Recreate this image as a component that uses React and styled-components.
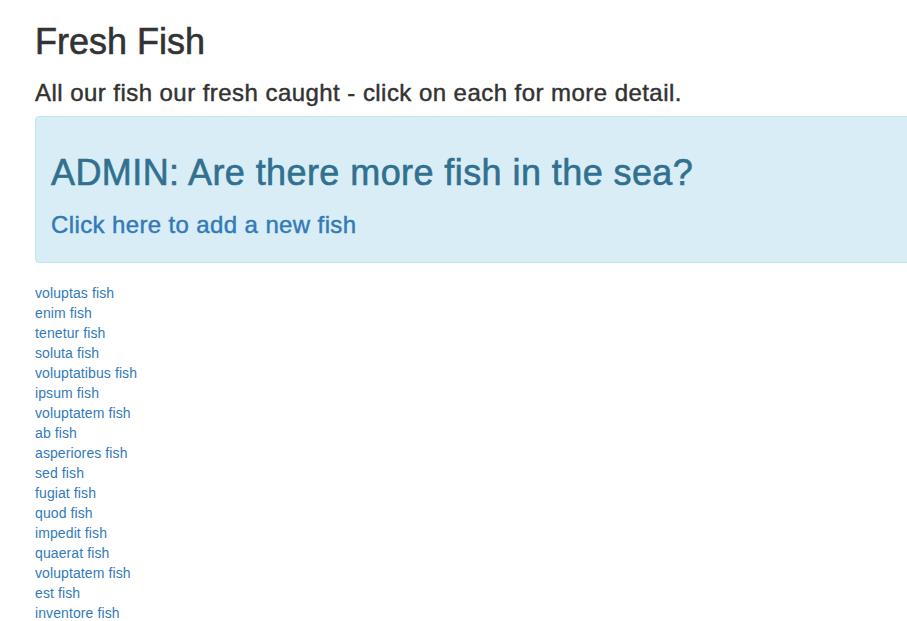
import React from "react";
import styled, { createGlobalStyle } from "styled-components";

const Global = createGlobalStyle`
  html, body { margin: 0; padding: 0; background: #fff; overflow: hidden; }
  body {
    font-family: "Liberation Sans", Arial, Helvetica, sans-serif;
    font-size: 14px;
    line-height: 1.42857143;
    color: #333;
  }
`;

const Page = styled.div`
  padding: 0 0 0 35px;
  width: 1200px;
`;

const Title = styled.h1`
  font-size: 36px;
  font-weight: 500;
  line-height: 1.1;
  margin: 20px 0 10px;
  padding-top: 2px;
  color: #333;
  -webkit-text-stroke: 0.6px #333;
`;

const Subtitle = styled.h3`
  font-size: 24px;
  font-weight: 500;
  line-height: 1.1;
  margin: 18px 0 10px;
  color: #333;
  letter-spacing: 0.45px;
  -webkit-text-stroke: 0.45px #333;
`;

const Alert = styled.div`
  padding: 15px;
  margin-bottom: 20px;
  border: 1px solid #bce8f1;
  border-radius: 4px;
  background: #d9edf7;
  color: #31708f;
`;

const AlertHeading = styled.h1`
  font-size: 36px;
  font-weight: 500;
  line-height: 1.1;
  margin: 20px 0 10px;
  padding-top: 1px;
  color: #31708f;
  letter-spacing: 0.42px;
  -webkit-text-stroke: 0.6px #31708f;
`;

const AlertLinkHeading = styled.h3`
  font-size: 24px;
  font-weight: 500;
  line-height: 1.1;
  margin: 19px 0 9px;
  letter-spacing: 0.38px;
`;

const Link = styled.a`
  color: #337ab7;
  text-decoration: none;
  -webkit-text-stroke: 0.45px #337ab7;
`;

const FishList = styled.div`
  display: flex;
  flex-direction: column;
  align-items: flex-start;
`;

const FishLink = styled.a`
  color: #337ab7;
  text-decoration: none;
  font-size: 14px;
  line-height: 20px;
  letter-spacing: 0.1px;
`;

const fish = [
  "voluptas", "enim", "tenetur", "soluta", "voluptatibus", "ipsum",
  "voluptatem", "ab", "asperiores", "sed", "fugiat", "quod", "impedit",
  "quaerat", "voluptatem", "est", "inventore",
];

export default function App() {
  return (
    <>
      <Global />
      <Page>
        <Title>Fresh Fish</Title>
        <Subtitle>All our fish our fresh caught - click on each for more detail.</Subtitle>
        <Alert>
          <AlertHeading>ADMIN: Are there more fish in the sea?</AlertHeading>
          <AlertLinkHeading>
            <Link href="#">Click here to add a new fish</Link>
          </AlertLinkHeading>
        </Alert>
        <FishList>
          {fish.map((f, i) => (
            <FishLink key={i} href="#">{f} fish</FishLink>
          ))}
        </FishList>
      </Page>
    </>
  );
}
